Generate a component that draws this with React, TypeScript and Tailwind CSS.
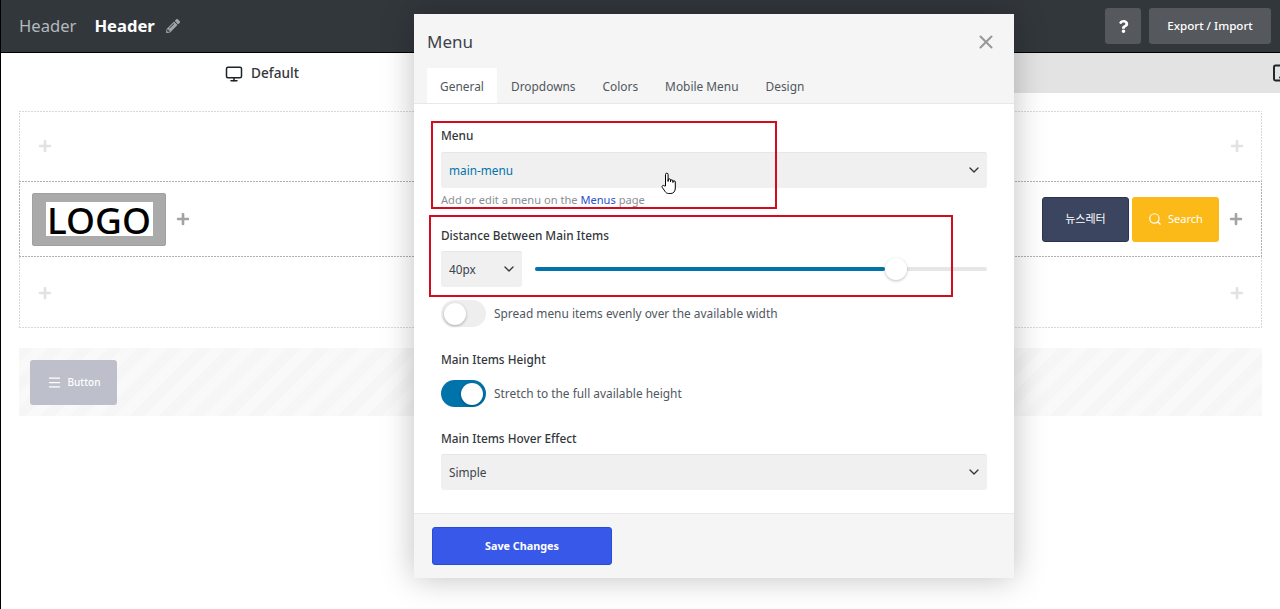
import { ChevronDown, Menu, Monitor, Search, Tablet, X } from "lucide-react";
import { FaPencilAlt, FaPlus, FaQuestion } from "react-icons/fa";

const font = "font-['Noto_Sans','Noto_Sans_CJK_KR',sans-serif]";

function Select({ text, blue, className }: { text: string; blue?: boolean; className: string }) {
  return (
    <div className={`flex h-9 items-center justify-between rounded-[3px] bg-[#f0f0f0] pl-2 pr-[5px] shadow-[inset_0_1px_0_#e6e6e6] ${className}`}>
      <span className={`pt-[1px] text-[11.8px] ${blue ? "text-[#0073aa]" : "text-[#3c434a]"}`}>{text}</span>
      <ChevronDown size={16} strokeWidth={2} className="text-[#32373c]" />
    </div>
  );
}

function Toggle({ on }: { on?: boolean }) {
  return (
    <div className={`flex h-[27px] w-[45px] shrink-0 items-center rounded-full px-[3px] ${on ? "justify-end bg-[#0073aa]" : "justify-start bg-[#eeeeee]"}`}>
      <div className="h-[22px] w-[22px] rounded-full bg-white shadow-[0_1px_3px_rgba(0,0,0,0.3)]" />
    </div>
  );
}

function Label({ children, className = "" }: { children: string; className?: string }) {
  return <div className={`text-[11.8px] leading-[18px] font-medium text-[#32373c] ${className}`}>{children}</div>;
}

function Row({ className }: { className: string }) {
  return (
    <div className={`flex items-center justify-between pl-[19px] pr-[18px] ${className}`}>
      <FaPlus size={14} className="text-[#e2e2e2]" />
      <FaPlus size={14} className="text-[#e2e2e2]" />
    </div>
  );
}

export default function App() {
  return (
    <div className={`relative h-[609px] w-[1280px] overflow-hidden border-l border-black bg-white ${font}`}>
      <div className="flex h-[53px] items-center justify-between border-b border-black bg-[#32373c] pl-[18px] pr-[9px]">
        <div className="flex items-center pt-[1px]">
          <span className="text-[16.6px] text-[#b4b9be]">Header</span>
          <span className="ml-[18px] text-[16.6px] font-bold text-white">Header</span>
          <FaPencilAlt size={14} className="ml-[11px] text-[#a0a5aa]" />
        </div>
        <div className="flex items-center gap-2">
          <div className="flex h-9 w-9 items-center justify-center rounded-[3px] bg-[#55585d]">
            <FaQuestion size={13} className="text-white" />
          </div>
          <div className="flex h-9 w-[122px] items-center justify-center rounded-[3px] bg-[#55585d] text-[11.6px] font-medium text-white">
            Export / Import
          </div>
        </div>
      </div>

      <div className="flex h-10">
        <div className="flex w-[522px] items-center justify-center gap-2 pt-[1px]">
          <Monitor size={18} className="text-[#1d2327]" />
          <span className="text-[13.6px] font-medium text-[#32373c]">Default</span>
        </div>
        <div className="flex flex-1 items-center justify-end overflow-hidden bg-[#e3e3e3]">
          <Tablet size={18} strokeWidth={2.6} className="mr-[-9px] text-[#1d2327]" />
        </div>
      </div>

      <div className="ml-[18px] mt-[18px] w-[1243px]">
        <Row className="h-[70px] [background:repeating-linear-gradient(90deg,#d8d8d8_0_2px,transparent_2px_3px)_top/100%_1px_no-repeat,repeating-linear-gradient(0deg,#d8d8d8_0_2px,transparent_2px_3px)_left/1px_100%_no-repeat,repeating-linear-gradient(0deg,#d8d8d8_0_2px,transparent_2px_3px)_right/1px_100%_no-repeat]" />
        <div className="flex h-[76px] items-center justify-between pl-[13px] pr-[19px] [background:repeating-linear-gradient(90deg,#b0b0b0_0_2px,transparent_2px_3px)_top/100%_1px_no-repeat,repeating-linear-gradient(90deg,#b0b0b0_0_2px,transparent_2px_3px)_bottom/100%_1px_no-repeat,repeating-linear-gradient(0deg,#b0b0b0_0_2px,transparent_2px_3px)_left/1px_100%_no-repeat,repeating-linear-gradient(0deg,#b0b0b0_0_2px,transparent_2px_3px)_right/1px_100%_no-repeat]">
          <div className="flex items-center">
            <div className="flex h-[53px] w-[134px] items-center justify-center rounded-[2px] border border-[#a0a0a0] bg-[#aaaaaa]">
              <div className="flex h-[34px] w-[107px] items-center justify-center bg-white text-[37px] leading-none font-medium text-black">LOGO</div>
            </div>
            <FaPlus size={14} className="ml-[10px] text-[#a3a3a3]" />
          </div>
          <div className="flex items-center">
            <div className="flex h-[45px] w-[87px] items-center justify-center rounded-[3px] border border-[#2a3350] bg-[#3c4560] text-[11px] text-white">뉴스레터</div>
            <div className="ml-[3px] flex h-[45px] w-[87px] items-center justify-center gap-[6px] rounded-[3px] bg-[#fcba19] text-[11px] text-white">
              <Search size={14} />
              <span>Search</span>
            </div>
            <FaPlus size={14} className="ml-[10px] text-[#a3a3a3]" />
          </div>
        </div>
        <Row className="h-[71px] [background:repeating-linear-gradient(90deg,#d8d8d8_0_2px,transparent_2px_3px)_bottom/100%_1px_no-repeat,repeating-linear-gradient(0deg,#d8d8d8_0_2px,transparent_2px_3px)_left/1px_100%_no-repeat,repeating-linear-gradient(0deg,#d8d8d8_0_2px,transparent_2px_3px)_right/1px_100%_no-repeat]" />

        <div className="mt-[20px] flex h-[68px] items-center bg-[repeating-linear-gradient(135deg,#f6f6f6_0,#f6f6f6_10.5px,#f9f9f9_10.5px,#f9f9f9_21px)] pl-[11px]">
          <div className="flex h-[45px] w-[87px] items-center justify-center gap-[6px] rounded-[3px] bg-[#bdc0ca] text-[10px] font-medium text-white">
            <Menu size={15} />
            <span>Button</span>
          </div>
        </div>
      </div>

      {/* blue edge marks */}
      <div className="absolute left-[-1px] top-[183px] h-2 w-px bg-[#0a50d8]" />
      <div className="absolute left-[-1px] top-[205px] h-2 w-px bg-[#0a50d8]" />

      {/* modal */}
      <div className="absolute left-[413px] top-[14px] flex h-[564px] w-[600px] flex-col bg-white shadow-[0_0_30px_rgba(0,0,0,0.25)]">
        <div className="border-b border-[#e8e8e8] bg-[#f5f5f5] px-[13px]">
          <div className="flex h-[54px] items-center justify-between pt-[2px]">
            <span className="text-[17px] text-[#3c434a]">Menu</span>
            <X size={22} strokeWidth={2.3} className="mr-[4px] text-[#999999]" />
          </div>
          <div className="flex h-[35px] items-stretch text-[11.9px] text-[#50575e]">
            <div className="flex w-[70px] items-center justify-center rounded-t-[2px] bg-white pt-[3px]">General</div>
            <span className="ml-[14px] flex items-center pt-[3px]">Dropdowns</span>
            <span className="ml-[27px] flex items-center pt-[3px]">Colors</span>
            <span className="ml-[27px] flex items-center pt-[3px]">Mobile Menu</span>
            <span className="ml-[27px] flex items-center pt-[3px]">Design</span>
          </div>
        </div>

        <div className="flex-1 px-[27px] pt-[22px]">
          <Label>Menu</Label>
          <Select text="main-menu" blue className="mt-[8px]" />
          <div className="mt-[3px] text-[11.1px] leading-[18px] text-[#8c8f94]">
            Add or edit a menu on the <span className="text-[#2a52c9]">Menus</span> page
          </div>
          <Label className="mt-[17px]">Distance Between Main Items</Label>
          <div className="mt-[7px] flex h-9 items-center">
            <Select text="40px" className="w-[81px]" />
            <div className="relative ml-[13px] flex h-1 flex-1 overflow-visible rounded-full bg-[#e6e6e6]">
              <div className="h-1 w-[350px] rounded-full bg-[#0073aa]" />
              <div className="absolute left-[350px] top-[-9px] h-[22px] w-[22px] rounded-full bg-white shadow-[0_1px_3px_rgba(0,0,0,0.25)]" />
            </div>
          </div>
          <div className="mt-[13px] flex items-center gap-2">
            <Toggle />
            <span className="pt-[1px] text-[11.9px] text-[#50575e]">Spread menu items evenly over the available width</span>
          </div>
          <Label className="mt-[23px]">Main Items Height</Label>
          <div className="mt-[12px] flex items-center gap-2">
            <Toggle on />
            <span className="pt-[1px] text-[11.9px] text-[#50575e]">Stretch to the full available height</span>
          </div>
          <Label className="mt-[22px]">Main Items Hover Effect</Label>
          <Select text="Simple" className="mt-[7px]" />
        </div>

        <div className="flex h-[65px] items-center border-t border-[#e8e8e8] bg-[#f5f5f5] pl-[18px]">
          <div className="flex h-[38px] w-[180px] items-center justify-center rounded-[3px] border border-[#2450cf] bg-[#3858e9] pt-[1px] text-[10.8px] font-bold text-white">
            Save Changes
          </div>
        </div>
      </div>

      {/* annotations */}
      <div className="absolute left-[430px] top-[121px] h-[88px] w-[346px] border-2 border-[#d40a1e]" />
      <div className="absolute left-[428px] top-[215px] h-[82px] w-[524px] border-2 border-[#d40a1e]" />

      {/* hand cursor */}
      <svg className="absolute left-[660px] top-[172px]" width="18" height="23" viewBox="0 0 18 23" fill="#fff" stroke="#000" strokeWidth="1" strokeLinejoin="round">
        <path d="M4.5 14V2.5a1.3 1.3 0 0 1 2.6 0V9.5V8a1.2 1.2 0 0 1 2.4 0v2V9a1.2 1.2 0 0 1 2.4 0v1.5V10a1.2 1.2 0 0 1 2.4 0v6c0 3-1.6 5.5-4.5 5.5H7.5c-1.6 0-2.6-.8-3.4-2L1.3 15.5c-.9-1.6 1-2.8 2-1.6z" />
      </svg>
    </div>
  );
}
